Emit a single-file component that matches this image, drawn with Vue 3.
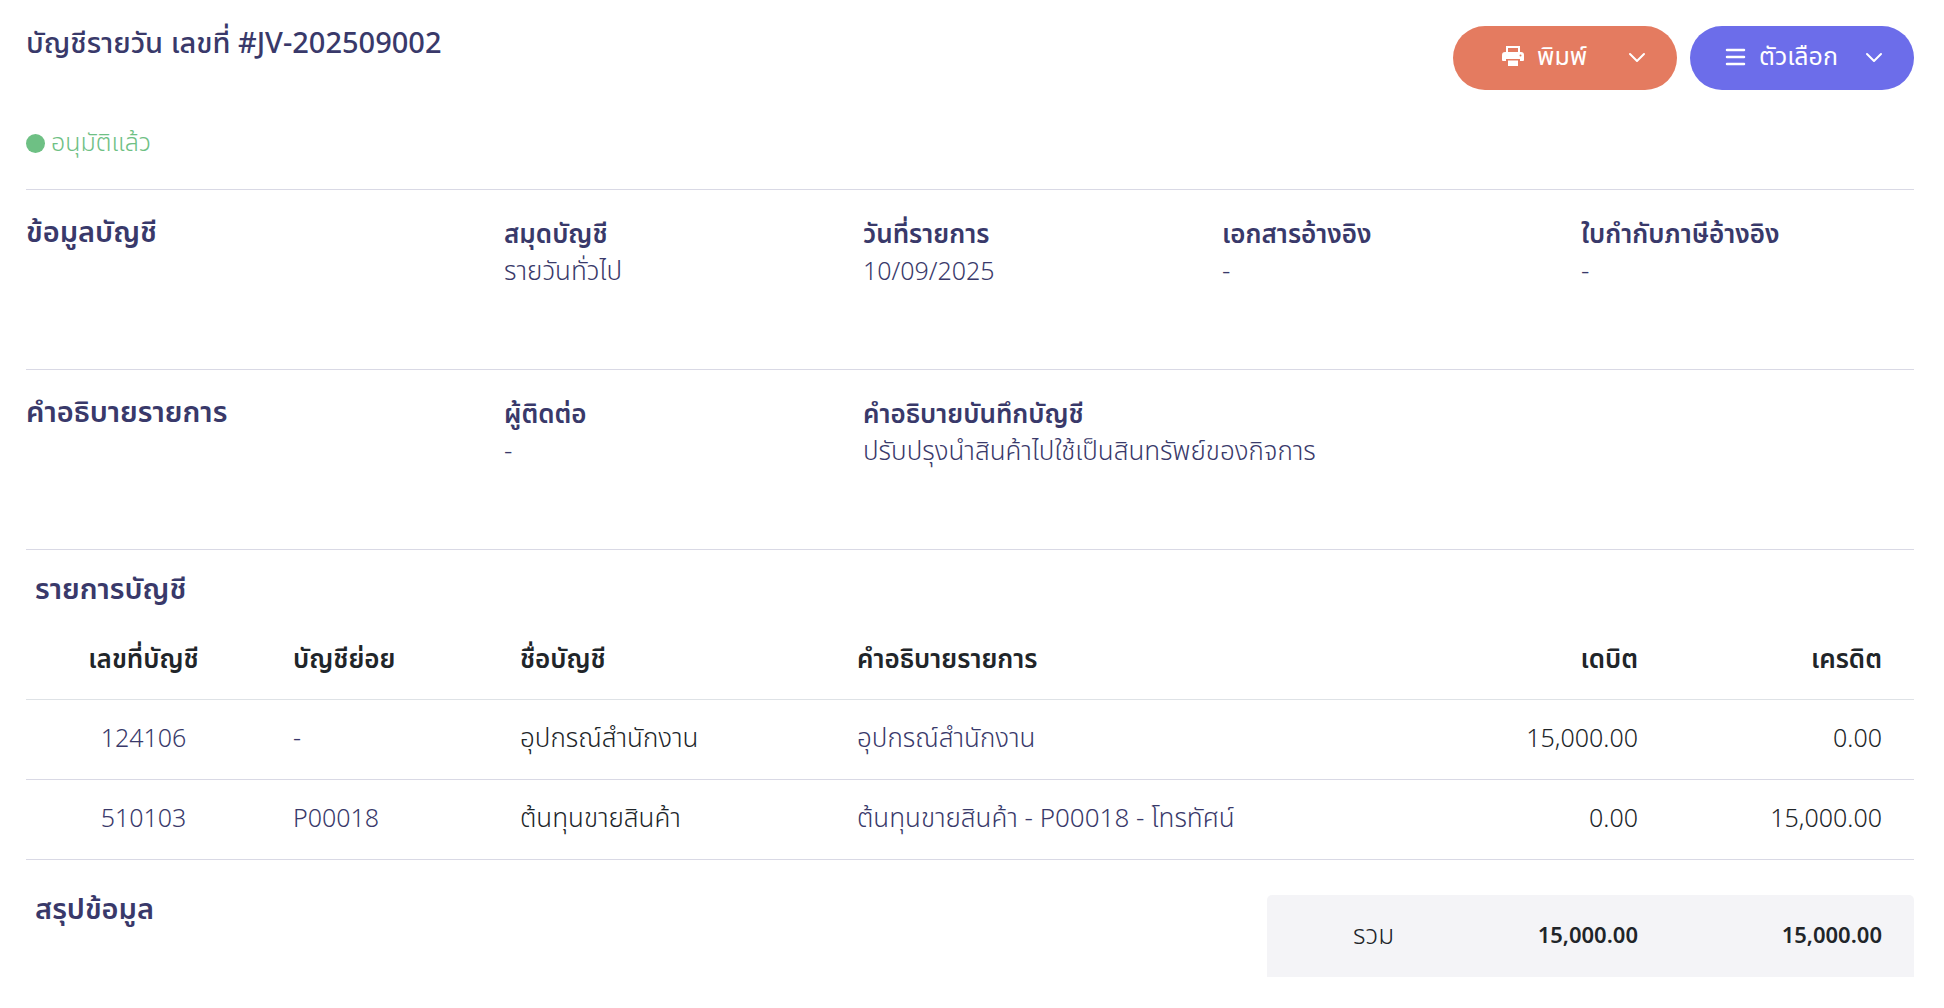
<script setup>
const accountInfo = [
  { label: 'สมุดบัญชี', value: 'รายวันทั่วไป' },
  { label: 'วันที่รายการ', value: '10/09/2025', numeric: true },
  { label: 'เอกสารอ้างอิง', value: '-' },
  { label: 'ใบกำกับภาษีอ้างอิง', value: '-' },
]

const entryInfo = [
  { label: 'ผู้ติดต่อ', value: '-' },
  { label: 'คำอธิบายบันทึกบัญชี', value: 'ปรับปรุงนำสินค้าไปใช้เป็นสินทรัพย์ของกิจการ', wide: true },
]

const lines = [
  { code: '124106', sub: '-', name: 'อุปกรณ์สำนักงาน', detail: 'อุปกรณ์สำนักงาน', debit: '15,000.00', credit: '0.00' },
  { code: '510103', sub: 'P00018', name: 'ต้นทุนขายสินค้า', detail: 'ต้นทุนขายสินค้า - P00018 - โทรทัศน์', debit: '0.00', credit: '15,000.00' },
]
</script>

<template>
  <main class="page">
    <header class="top">
      <h1 class="heading title">บัญชีรายวัน เลขที่ #JV-202509002</h1>
      <div class="actions">
        <button type="button" class="btn print">
          <svg class="icon" viewBox="0 0 22 22" aria-hidden="true">
            <path fill="none" stroke="currentColor" stroke-width="2" d="M5 6V1h12v5" />
            <path fill="currentColor" d="M3 6h16a3 3 0 0 1 3 3v5a1 1 0 0 1-1 1h-3v-2H4v2H1a1 1 0 0 1-1-1V9a3 3 0 0 1 3-3zM6 14.500h10V20H6z" />
            <circle cx="18.500" cy="9.500" r="1" fill="#e47b60" />
          </svg>
          <span>พิมพ์</span>
          <svg class="chevron" viewBox="0 0 18 18" aria-hidden="true"><path d="M2 6l7 7 7-7" /></svg>
        </button>
        <button type="button" class="btn options">
          <svg class="icon" viewBox="0 0 22 22" aria-hidden="true">
            <path fill="none" stroke="currentColor" stroke-width="2.500" stroke-linecap="round" d="M3 4h17M3 11h17M3 18h17" />
          </svg>
          <span>ตัวเลือก</span>
          <svg class="chevron" viewBox="0 0 18 18" aria-hidden="true"><path d="M2 6l7 7 7-7" /></svg>
        </button>
      </div>
    </header>

    <p class="status"><span class="dot"></span>อนุมัติแล้ว</p>

    <section class="info">
      <h2 class="heading">ข้อมูลบัญชี</h2>
      <dl v-for="item in accountInfo" :key="item.label" class="field">
        <dt>{{ item.label }}</dt>
        <dd :class="{ num: item.numeric }">{{ item.value }}</dd>
      </dl>
    </section>

    <section class="info">
      <h2 class="heading">คำอธิบายรายการ</h2>
      <dl v-for="item in entryInfo" :key="item.label" class="field" :class="{ wide: item.wide }">
        <dt>{{ item.label }}</dt>
        <dd>{{ item.value }}</dd>
      </dl>
    </section>

    <section class="entries">
      <h2 class="heading inset">รายการบัญชี</h2>
      <table>
        <colgroup>
          <col class="c-code" /><col class="c-sub" /><col class="c-name" /><col class="c-detail" /><col class="c-money" /><col class="c-money" />
        </colgroup>
        <thead>
          <tr>
            <th class="center">เลขที่บัญชี</th>
            <th>บัญชีย่อย</th>
            <th>ชื่อบัญชี</th>
            <th>คำอธิบายรายการ</th>
            <th class="right">เดบิต</th>
            <th class="right">เครดิต</th>
          </tr>
        </thead>
        <tbody>
          <tr v-for="line in lines" :key="line.code">
            <td class="center num"><a href="#">{{ line.code }}</a></td>
            <td class="num navy">{{ line.sub }}</td>
            <td>{{ line.name }}</td>
            <td class="navy">{{ line.detail }}</td>
            <td class="right num">{{ line.debit }}</td>
            <td class="right num">{{ line.credit }}</td>
          </tr>
        </tbody>
      </table>
    </section>

    <section class="summary">
      <h2 class="heading inset">สรุปข้อมูล</h2>
      <div class="total">
        <span>รวม</span>
        <strong>15,000.00</strong>
        <strong>15,000.00</strong>
      </div>
    </section>
  </main>
</template>

<style>
body {
  background: #fff;
}
</style>

<style scoped>
.page {
  padding: 26px 30px 30px 26px;
  font-family: 'Noto Sans Thai', 'Noto Sans', sans-serif;
  font-size: 26px;
  font-weight: 300;
  line-height: 37px;
  color: #39396a;
}

.heading {
  margin: 0;
  font-size: 29px;
  font-weight: 600;
  line-height: 34px;
}

.title {
  font-weight: 500;
  line-height: 37px;
}

.top {
  display: flex;
  justify-content: space-between;
  align-items: flex-start;
}

.actions {
  display: flex;
  gap: 13px;
}

.btn {
  display: flex;
  align-items: center;
  width: 224px;
  height: 64px;
  padding: 0 31px 2px 34px;
  border: 0;
  border-radius: 32px;
  color: #fff;
  font: inherit;
  font-size: 25px;
  font-weight: 400;
  cursor: pointer;
}

.print {
  padding-left: 49px;
  background: #e47b60;
}

.options {
  background: #6c6dea;
}

.icon {
  width: 22px;
  height: 22px;
  margin-right: 13px;
}

.chevron {
  width: 18px;
  height: 18px;
  margin-left: auto;
  fill: none;
  stroke: currentColor;
  stroke-width: 2;
  stroke-linecap: round;
  stroke-linejoin: round;
}

.status {
  display: flex;
  align-items: center;
  gap: 6px;
  margin: 35px 0 27px;
  font-size: 25px;
  color: #6ec084;
}

.dot {
  width: 19px;
  height: 19px;
  border-radius: 50%;
  background: currentColor;
}

.info {
  display: grid;
  grid-template-columns: 478fr 359fr 359fr 359fr 333fr;
  min-height: 179px;
  padding-top: 26px;
  box-sizing: border-box;
  border-top: 1px solid #d9d9e5;
  margin-bottom: 1px;
}

.field {
  margin: 1px 0 0;
}

.wide {
  grid-column: span 3;
}

dt {
  font-weight: 600;
}

dd {
  margin: 0;
}

.num {
  font-size: 25px;
}

.entries {
  padding-top: 23px;
  border-top: 1px solid #d9d9e5;
}

.inset {
  padding-left: 9px;
}

table {
  width: 100%;
  margin-top: 14px;
  border-collapse: collapse;
  table-layout: fixed;
  color: #212529;
}

.c-code { width: 235px; }
.c-sub { width: 227px; }
.c-name { width: 337px; }
.c-detail { width: 601px; }
.c-money { width: 244px; }

th,
td {
  height: 79px;
  padding: 0 32px;
  text-align: left;
  border-bottom: 1px solid #d9d9e5;
}

th {
  height: 78px;
  font-weight: 600;
  border-bottom-color: #dee2e6;
}

.center {
  padding: 0;
  text-align: center;
}

.right {
  text-align: right;
}

a {
  color: #39396a;
  text-decoration: none;
}

.navy {
  color: #39396a;
}

.summary {
  display: grid;
  grid-template-columns: 1241fr 647fr;
  align-items: start;
  margin-top: 35px;
}

.summary .heading {
  line-height: 30px;
}

.total {
  display: grid;
  grid-template-columns: 159fr 244fr 244fr;
  align-items: center;
  height: 82px;
  border-radius: 5px 5px 0 0;
  background: #f4f4f7;
  color: #212529;
  text-align: right;
}

.total > * {
  padding-right: 32px;
}

.total strong {
  font-size: 22px;
  font-weight: 600;
}
</style>
